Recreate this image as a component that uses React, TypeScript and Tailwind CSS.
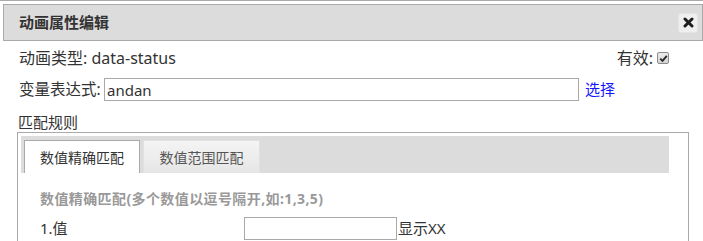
import React from "react";

const FONT = '"Noto Sans", "Noto Sans CJK SC", sans-serif';

export default function App() {
  return (
    <div
      className="w-[703px] h-[241px] overflow-hidden bg-white border-t border-[#aaa] text-[#333]"
      style={{ fontFamily: FONT }}
    >
      {/* title bar */}
      <div className="ml-[3px] mt-[3px] h-[37px] border border-[#aaa] bg-[#dcdcdc] flex items-center justify-between pl-[15px] pr-[4px]">
        <span className="text-[15px] font-bold text-[#333] leading-none">动画属性编辑</span>
        <button className="w-[20px] h-[20px] rounded-[3px] bg-[#efefef] border border-[#e4e4e4] flex items-center justify-center">
          <svg width="11" height="11" viewBox="0 0 11 11">
            <path d="M2 2 L9 9 M9 2 L2 9" stroke="#1e1e1e" strokeWidth="3" strokeLinecap="round" />
          </svg>
        </button>
      </div>

      <div className="pl-[19px]">
        {/* row 1 */}
        <div className="mt-[6px] h-[22px] flex items-center justify-between pr-[34px] text-[16px]">
          <span>动画类型: data-status</span>
          <span className="flex items-center">
            <span>有效:</span>
            <span className="ml-[4px] w-[12px] h-[12px] rounded-[2px] border border-[#8a8a8a] bg-gradient-to-b from-[#ececec] to-[#d4d4d4] flex items-center justify-center">
              <svg width="9" height="9" viewBox="0 0 9 9">
                <path d="M1.3 4.6 L3.5 6.8 L7.8 1.8" stroke="#2a2a2a" strokeWidth="1.9" fill="none" />
              </svg>
            </span>
          </span>
        </div>

        {/* row 2 */}
        <div className="mt-[9px] h-[23px] flex items-center text-[15.5px]">
          <span className="w-[85px] shrink-0">变量表达式:</span>
          <input
            className="w-[475px] h-[23px] border border-[#a9a9a9] px-[2px] outline-none text-[15px] text-[#333]"
            defaultValue="andan"
            style={{ fontFamily: FONT }}
          />
          <span className="ml-[6px] text-[#1515ff] text-[15px]">选择</span>
        </div>

        {/* row 3 */}
        <div className="mt-[11px] h-[20px] flex items-center text-[15px] -ml-[1px]">匹配规则</div>
      </div>

      {/* tabs box */}
      <div className="ml-[17px] w-[672px] h-[120px] border border-[#aaa] pt-[3px] pl-[3px] pr-[19px]">
        <div className="h-[37px] bg-[#dcdcdc] flex items-end pl-[3px]">
          <div className="w-[116px] h-[33px] bg-white border border-b-0 border-[#aaa] flex items-center justify-center text-[14px] text-[#333]">
            数值精确匹配
          </div>
          <div className="ml-[3px] w-[117px] h-[33px] bg-gradient-to-b from-[#f4f4f4] to-[#e6e6e6] border border-b-0 border-[#e0e0e0] flex items-center justify-center text-[14px] text-[#555]">
            数值范围匹配
          </div>
        </div>

        <div className="pl-[19px]">
          <div className="mt-[15px] h-[20px] flex items-center text-[14px] font-bold text-[#999] tracking-[0.4px]">
            数值精确匹配(多个数值以逗号隔开,如:1,3,5)
          </div>
          <div className="mt-[9px] h-[23px] flex items-center text-[15px]">
            <span className="w-[204px] shrink-0">1.值</span>
            <input
              className="w-[153px] h-[23px] border border-[#a9a9a9] outline-none"
              defaultValue=""
            />
            <span className="ml-[1px]">显示XX</span>
          </div>
        </div>
      </div>
    </div>
  );
}
